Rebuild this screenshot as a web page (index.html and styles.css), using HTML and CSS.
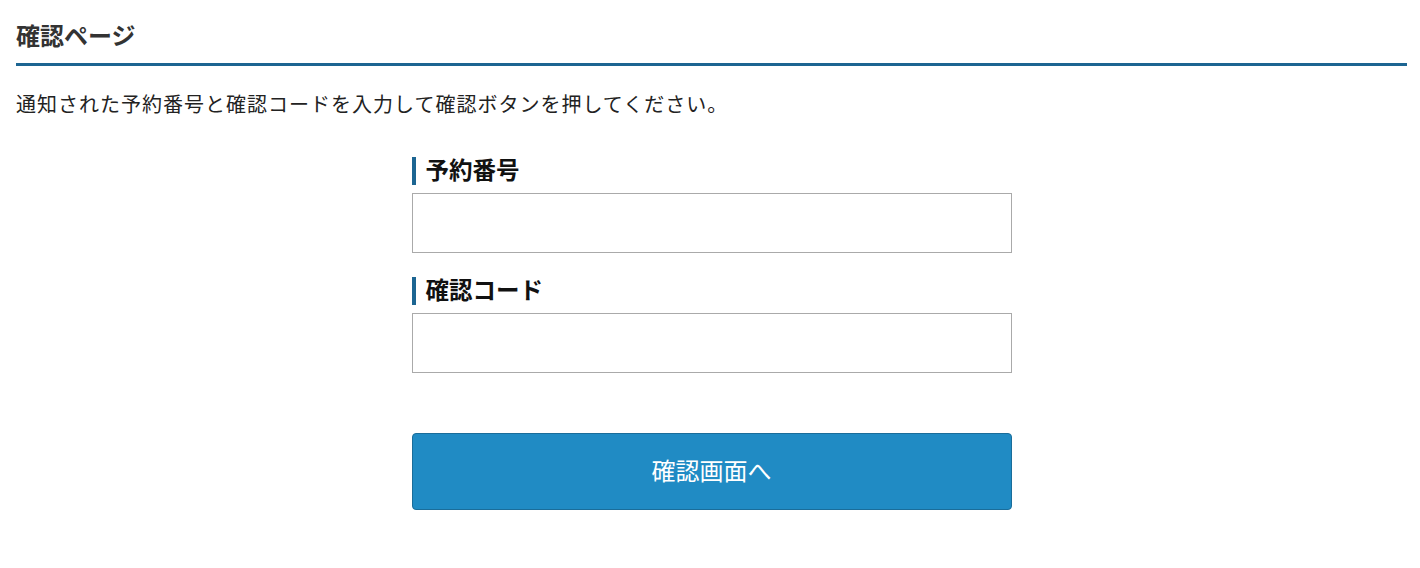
FILE: index.html
```html
<!DOCTYPE html>
<html lang="ja">
<head>
    <meta charset="UTF-8">
    <title>確認ページ</title>
    <link rel="stylesheet" href="styles.css">
</head>
<body>
    <div class="page">
        <h1 class="page-title">確認ページ</h1>
        <p class="lead">通知された予約番号と確認コードを入力して確認ボタンを押してください。</p>

        <form class="confirm-form">
            <div class="field">
                <label class="field-label" for="reserve-no">予約番号</label>
                <input class="field-input" id="reserve-no" type="text">
            </div>
            <div class="field">
                <label class="field-label" for="confirm-code">確認コード</label>
                <input class="field-input" id="confirm-code" type="text">
            </div>
            <button class="submit-btn" type="button">確認画面へ</button>
        </form>
    </div>
</body>
</html>
```

FILE: styles.css
```css
body {
    margin: 0;
    background-color: #ffffff;
    font-family: "Noto Sans CJK JP", "Noto Sans", sans-serif;
    color: #222;
}

.page {
    padding: 0 13px 0 16px;
}

.page-title {
    margin: 0;
    padding: 20px 0 13px;
    font-size: 24px;
    line-height: 30px;
    font-weight: bold;
    color: #333;
    border-bottom: 3px solid #1c6592;
}

.lead {
    margin: 25px 0 0;
    font-size: 20px;
    line-height: 26px;
    letter-spacing: 1px;
    color: #222;
}

.confirm-form {
    width: 600px;
    margin: 40px auto 0;
    display: flex;
    flex-direction: column;
}

.field {
    display: flex;
    flex-direction: column;
    margin-bottom: 24px;
}

.field-label {
    border-left: 4px solid #1c6592;
    padding: 0 0 4px 10px;
    font-size: 23.5px;
    line-height: 24px;
    font-weight: bold;
    color: #111;
    margin-bottom: 8px;
}

.field-input {
    box-sizing: border-box;
    height: 60px;
    border: 1px solid #aaaaaa;
    border-radius: 0;
    font-size: 18px;
    padding: 0 10px;
}

.submit-btn {
    margin-top: 36px;
    height: 77px;
    padding-bottom: 5px;
    border: 1px solid #1a6d9a;
    border-radius: 4px;
    background-color: #208bc4;
    color: #ffffff;
    font-family: inherit;
    font-size: 24px;
}
```
